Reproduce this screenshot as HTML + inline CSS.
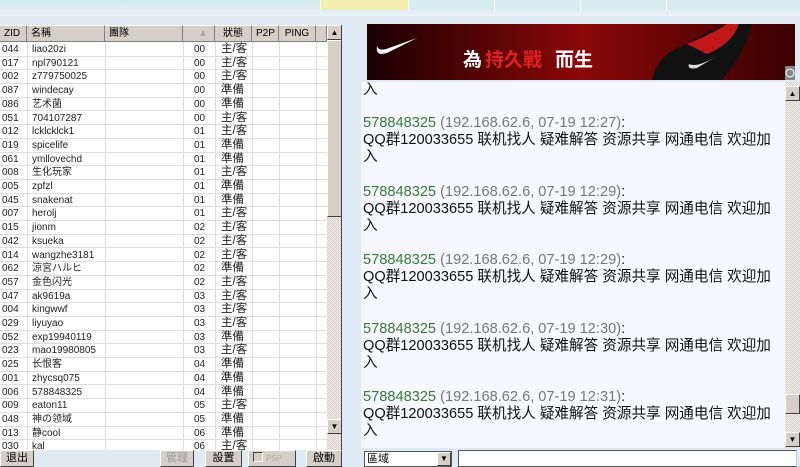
<!DOCTYPE html><html><head><meta charset="utf-8"><style>
*{margin:0;padding:0;box-sizing:border-box}
body{width:800px;height:467px;overflow:hidden;background:#dfeaf2;font-family:"Liberation Sans","Noto Sans CJK SC",sans-serif;position:relative}
.top{position:absolute;left:0;top:0;width:800px;height:16px;background:linear-gradient(#d3e8f0,#eaf3f8)}
.tab{position:absolute;top:0;height:10px;border-left:1px solid #fff}
#tbl{position:absolute;left:0;top:25px;width:342px;height:425px;background:#fff;border-right:1px solid #444;overflow:hidden}
.hd{position:absolute;top:0;height:17px;background:#d4d0c8;border-right:1px solid #808080;border-bottom:1px solid #808080;border-top:1px solid #fff;font-size:10px;line-height:15px;padding-left:4px;color:#000}
.row{position:absolute;left:0;width:327px;height:13.7px;border-bottom:1px solid #ddd;font-size:10px;line-height:13px;color:#222}
.row span{position:absolute;top:0}
.vl{position:absolute;top:17px;bottom:0;width:1px;background:#ddd}
.sb{position:absolute;left:327px;top:0;width:15px;height:425px;background:repeating-conic-gradient(#eee 0 25%,#d4d0c8 0 50%) 0 0/2px 2px}
.btn{position:absolute;background:#d4d0c8;border:1px solid;border-color:#fff #404040 #404040 #fff;font-size:8px;text-align:center}
.bot{position:absolute;top:450px;height:17px;background:#d4d0c8;border:1px solid;border-color:#fff #404040 #404040 #fff;font-size:11px;line-height:15px;text-align:center}
#chat{position:absolute;left:361px;top:82px;width:439px;height:366px;background:#f6f8fd;font-size:14.6px;line-height:17px;color:#111;overflow:hidden}
.m{position:absolute;left:2px;white-space:nowrap}
.n{color:#3a7a3a}.ip{color:#777}
</style></head><body>
<div class="top"></div>
<div class="tab" style="left:320px;width:88px;background:#f3edb0"></div>
<div class="tab" style="left:408px;width:86px;background:#d8ecf3"></div>
<div class="tab" style="left:494px;width:86px;background:#d8ecf3"></div>
<div class="tab" style="left:580px;width:86px;background:#d8ecf3"></div>
<div class="tab" style="left:666px;width:134px;background:#d8ecf3"></div>
<div id="tbl">
<div class="hd" style="left:0;width:27px">ZID</div>
<div class="hd" style="left:27px;width:78px">名稱</div>
<div class="hd" style="left:105px;width:78px">團隊</div>
<div class="hd" style="left:183px;width:32px;text-align:right;padding-right:6px;color:#aaa">▲</div>
<div class="hd" style="left:215px;width:37px;text-align:center;padding:0">狀態</div>
<div class="hd" style="left:252px;width:27px">P2P</div>
<div class="hd" style="left:279px;width:37px;text-align:center;padding:0">PING</div>
<div class="hd" style="left:316px;width:11px"></div>
<div class="vl" style="left:27px"></div><div class="vl" style="left:105px"></div><div class="vl" style="left:183px"></div><div class="vl" style="left:215px"></div><div class="vl" style="left:252px"></div><div class="vl" style="left:279px"></div><div class="vl" style="left:316px"></div>
<div id="rows"></div>
<div class="sb">
<div class="btn" style="left:0;top:0;width:15px;height:15px;line-height:13px">▲</div>
<div class="btn" style="left:0;top:15px;width:15px;height:177px"></div>
<div class="btn" style="left:0;top:394px;width:15px;height:15px;line-height:13px">▼</div>
</div>
</div>
<div class="bot" style="left:0;width:34px">退出</div>
<div class="bot" style="left:160px;width:34px;color:#999">管理</div>
<div class="bot" style="left:205px;width:37px">設置</div>
<div class="bot" style="left:248px;width:48px;color:#aaa;text-align:left;padding-left:4px"><span style="display:inline-block;width:10px;height:10px;border:1px solid #444;border-right-color:#fff;border-bottom-color:#fff;vertical-align:-1px"></span> <span style="font-size:8px">PSP</span></div>
<div class="bot" style="left:306px;width:36px">啟動</div>
<svg style="position:absolute;left:367px;top:24px" width="428" height="56">
<defs><linearGradient id="g" x1="0" x2="1"><stop offset="0" stop-color="#1a0000"/><stop offset=".5" stop-color="#8a0808"/><stop offset="1" stop-color="#3a0000"/></linearGradient></defs>
<rect width="428" height="56" fill="url(#g)"/>
<path d="M10 22 Q8 34 22 28 L50 14 L22 24 Q12 28 10 22Z" fill="#fff"/>
<text x="96" y="42" font-size="19" font-weight="bold" fill="#fff" font-family="Noto Sans CJK SC">為</text>
<text x="118" y="42" font-size="19" font-weight="bold" fill="#e02020" font-family="Noto Sans CJK SC">持久戰</text>
<text x="188" y="42" font-size="19" font-weight="bold" fill="#fff" font-family="Noto Sans CJK SC">而生</text>
<path d="M285 56 Q290 30 320 20 Q345 5 360 0 L385 0 Q380 25 360 50 L355 56Z" fill="#111"/>
<path d="M320 20 Q345 10 360 0 L372 0 Q365 20 340 30Z" fill="#c01818"/>
<path d="M322 40 Q330 44 350 32 L330 44 Q320 46 322 40Z" fill="#ddd"/>
<rect x="418" y="42" width="10" height="14" fill="#888"/><circle cx="423" cy="49" r="4" fill="none" stroke="#fff"/>
</svg>
<div id="chat">
<div class="m" style="top:0">入</div>
<div id="msgs"></div>
<div style="position:absolute;right:0;top:0;width:15px;height:366px;background:repeating-conic-gradient(#eee 0 25%,#d4d0c8 0 50%) 0 0/2px 2px">
<div class="btn" style="left:0;top:4px;width:15px;height:15px;line-height:13px">▲</div>
<div class="btn" style="left:0;top:312px;width:15px;height:20px"></div>
<div class="btn" style="left:0;top:350px;width:15px;height:15px;line-height:13px">▼</div>
</div>
</div>
<div style="position:absolute;left:364px;top:451px;width:88px;height:16px;background:#fff;border:1px solid #555;font-size:11px;line-height:14px;padding-left:2px">區域<div class="btn" style="right:0;top:0;width:14px;height:14px;line-height:12px">▼</div></div>
<div style="position:absolute;left:458px;top:450px;width:339px;height:17px;background:#fff;border:1px solid #555;border-right-color:#ccc"></div>
<script>
var d=[["044","liao20zi","00","主/客"],["017","npl790121","00","主/客"],["002","z779750025","00","主/客"],["087","windecay","00","準備"],["086","艺术菌","00","準備"],["051","704107287","00","主/客"],["012","lcklcklck1","01","主/客"],["019","spicelife","01","準備"],["061","ymllovechd","01","準備"],["008","生化玩家","01","主/客"],["005","zpfzl","01","準備"],["045","snakenat","01","準備"],["007","herolj","01","主/客"],["015","jionm","02","主/客"],["042","ksueka","02","主/客"],["014","wangzhe3181","02","主/客"],["062","涼宮ハルヒ","02","準備"],["057","金色闪光","02","主/客"],["047","ak9619a","03","主/客"],["004","kingwwf","03","主/客"],["029","liyuyao","03","主/客"],["052","exp19940119","03","準備"],["023","mao19980805","03","主/客"],["025","长恨客","04","準備"],["001","zhycsq075","04","準備"],["006","578848325","04","準備"],["009","eaton11","05","主/客"],["048","神の领域","05","準備"],["013","静cool","06","準備"],["030","kal","06","主/客"]];
var h="";d.forEach(function(r,i){h+='<div class="row" style="top:'+(18+i*13.7)+'px"><span style="left:2px">'+r[0]+'</span><span style="left:32px">'+r[1]+'</span><span style="left:194px">'+r[2]+'</span><span style="left:221px;font-size:11.5px">'+r[3]+'</span></div>'});
document.getElementById("rows").innerHTML=h;
var t=["12:27","12:29","12:29","12:30","12:31"],m="";
t.forEach(function(x,i){var y=33+i*68.5;m+='<div class="m" style="top:'+y+'px"><span class="n">578848325</span> <span class="ip">(192.168.62.6, 07-19 '+x+')</span>:<br>QQ群120033655 联机找人 疑难解答 资源共享 网通电信 欢迎加<br>入</div>'});
document.getElementById("msgs").innerHTML=m;
</script>
</body></html>
